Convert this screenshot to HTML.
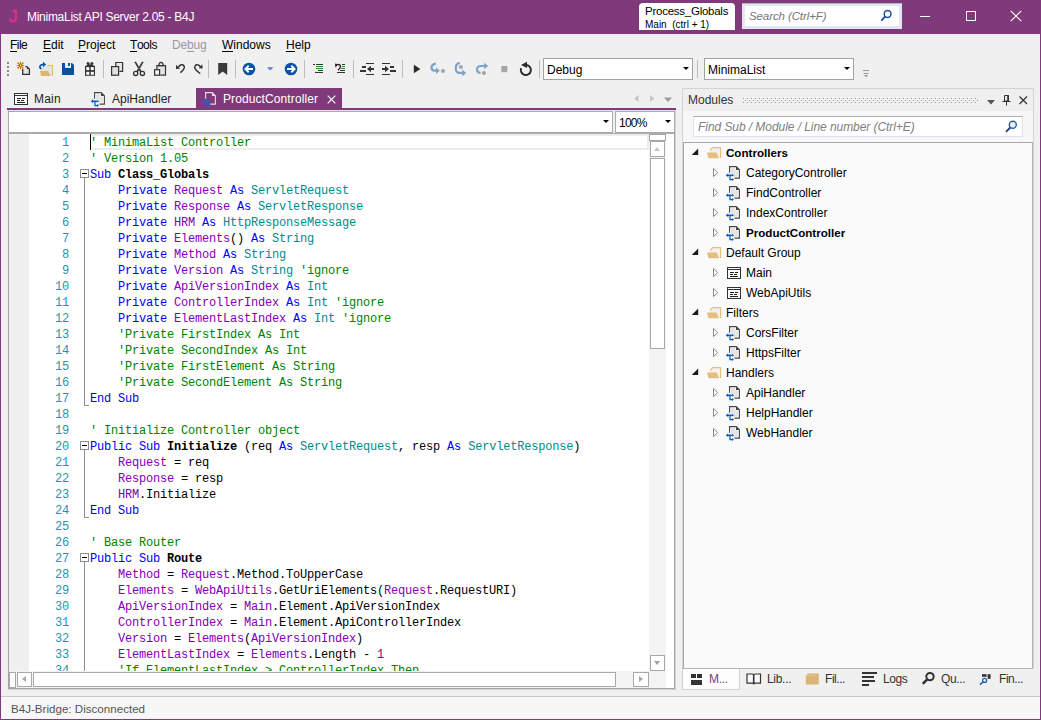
<!DOCTYPE html>
<html><head><meta charset="utf-8"><title>MinimaList API Server 2.05 - B4J</title>
<style>
*{box-sizing:border-box;margin:0;padding:0}
html,body{width:1041px;height:720px;overflow:hidden}
body{background:#80397B;font-family:"Liberation Sans",sans-serif;font-size:12px;color:#1e1e1e;position:relative}
div,span,svg{position:absolute}
.t{white-space:pre;line-height:16px;height:16px}
.t u{text-decoration:none;border-bottom:1px solid currentColor;display:inline-block;position:static;line-height:12px;height:13px}
#client{left:1px;top:34px;width:1039px;height:685px;background:#F0F0F0}
.sep{width:1px;height:18px;top:60px;background:#BDBDBD}
.combo{background:#fff;border:1px solid #A2A2A6}
.arr{width:0;height:0;border-left:3.2px solid transparent;border-right:3.2px solid transparent;border-top:3.6px solid #000}
#code div,#nums div{font-family:"Liberation Mono",monospace;font-size:12px;letter-spacing:-0.2px;line-height:16px;height:16px;white-space:pre}
#code div{left:90px;color:#000}
#code span{position:static}
#nums div{width:60px;text-align:right;left:9px;color:#2B91AF}
.k{color:#0000FF}.c{color:#008000}.v{color:#8000B8}.ty{color:#008B8B}.b{font-weight:bold;color:#000}.n{color:#8B008B}
.tree .t{font-size:12px}
</style></head><body>
<div id="title" style="left:0;top:0;width:1041px;height:34px;background:#80397B">
<div class="t" style="left:9px;top:6px;font-size:17.2px;-webkit-text-stroke:0.45px #E8289C;color:#E8289C;line-height:20px;height:20px">J</div>
<div class="t" style="left:27px;top:9px;font-size:12px;color:#fff;letter-spacing:-0.28px">MinimaList API Server 2.05 - B4J</div>
<div style="left:639px;top:3px;width:96px;height:27px;background:#fff;border-radius:4px 4px 0 0"></div>
<div class="t" style="left:645px;top:3px;font-size:11.5px;letter-spacing:-0.25px;color:#000">Process_Globals</div>
<div class="t" style="left:645px;top:18px;font-size:10px;color:#000;line-height:14px">Main  (ctrl + 1)</div>
<div style="left:742px;top:3px;width:160px;height:26px;background:#fff;border:3px solid #E2E6EE"></div>
<div style="left:742px;top:3px;width:160px;height:1px;background:#B4B6BA"></div>
<div class="t" style="left:749px;top:8px;font-size:11.5px;letter-spacing:-0.1px;font-style:italic;color:#767676">Search (Ctrl+F)</div>
<svg style="left:880px;top:9px" width="13" height="13" viewBox="0 0 13 13"><circle cx="7.6" cy="5" r="3.4" fill="none" stroke="#1E4E9C" stroke-width="1.5"/><path d="M5.3 7.5 L1.2 11.6" stroke="#1E4E9C" stroke-width="1.8"/></svg>
<div style="left:920px;top:16px;width:10px;height:1px;background:#fff"></div>
<div style="left:966px;top:11px;width:10px;height:10px;border:1px solid #fff"></div>
<svg style="left:1010px;top:10px" width="12" height="12" viewBox="0 0 12 12"><path d="M0.8 0.8 L11.2 11.2 M11.2 0.8 L0.8 11.2" stroke="#fff" stroke-width="1.1"/></svg>
</div>
<div id="client"></div>
<div class="t" style="left:10px;top:37px;font-size:12px;letter-spacing:-0.55px;color:#000"><u>F</u>ile</div>
<div class="t" style="left:43px;top:37px;font-size:12px;letter-spacing:0px;color:#000"><u>E</u>dit</div>
<div class="t" style="left:78px;top:37px;font-size:12px;letter-spacing:0px;color:#000"><u>P</u>roject</div>
<div class="t" style="left:130px;top:37px;font-size:12px;letter-spacing:-0.45px;color:#000"><u>T</u>ools</div>
<div class="t" style="left:172px;top:37px;font-size:12px;letter-spacing:-0.15px;color:#9A9A9A">De<u>b</u>ug</div>
<div class="t" style="left:222px;top:37px;font-size:12px;letter-spacing:0px;color:#000"><u>W</u>indows</div>
<div class="t" style="left:286px;top:37px;font-size:12px;letter-spacing:0px;color:#000"><u>H</u>elp</div>
<div id="toolbar">
<div style="left:7px;top:62px;width:2px;height:15px;background:repeating-linear-gradient(#8a8a8a 0 2px,transparent 2px 4px)"></div>
<div class="sep" style="left:103px"></div>
<div class="sep" style="left:208px"></div>
<div class="sep" style="left:235px"></div>
<div class="sep" style="left:304px"></div>
<div class="sep" style="left:353px"></div>
<div class="sep" style="left:402px"></div>
<div class="sep" style="left:539px"></div>
<div class="sep" style="left:697px"></div>
<svg style="left:0;top:56px" width="540" height="26" viewBox="0 56 540 26"><g stroke="#C8780A" stroke-width="1.15" fill="none"><path d="M20.5 61.8V64.4M20.5 66.6V69.2M16.8 65.5H19.4M21.6 65.5H24.2M18 63L19.4 64.4M23 63L21.6 64.4M18 68L19.4 66.6M23 68L21.6 66.6"/><circle cx="20.5" cy="65.5" r="1.3"/></g><g fill="#C8780A"><circle cx="18" cy="63" r="0.75"/><circle cx="23" cy="63" r="0.75"/><circle cx="18" cy="68" r="0.75"/><circle cx="23" cy="68" r="0.75"/></g><path d="M23.4 69V74.2H29.3V69.2L26.8 66.7H25.2" fill="#E4E4E4" stroke="none"/><path d="M22.7 69V74.3H29.4V69.2L26.9 66.6H25.4" fill="none" stroke="#333" stroke-width="1.3"/><path d="M27 66.9V69H29.2Z" fill="#333"/><path d="M40 66H52V75.5H41Z" fill="#E4E4E4"/><path d="M47.3 65.5H52.5V76" fill="none" stroke="#DDB56E" stroke-width="1"/><path d="M40 71.1H47.9L50.9 76H41Z" fill="#DDB56E"/><path d="M41.4 68.6C38.6 67.6 39.6 64.4 44 64.4" fill="none" stroke="#0854A8" stroke-width="1.7"/><path d="M43 61.8L46.2 64.4L43 67.2Z" fill="#0854A8"/><path d="M62 63H72L74 65V75H62Z" fill="#07519F"/><rect x="65" y="63" width="6" height="4.9" fill="#F4F4F4"/><rect x="68" y="63" width="2" height="2.9" fill="#07519F"/><rect x="85" y="66" width="10" height="9.8" fill="#333"/><g fill="#fff"><rect x="86.3" y="67.1" width="3" height="3"/><rect x="90.8" y="67.1" width="3" height="3"/><rect x="86.3" y="71.8" width="3" height="3"/><rect x="90.8" y="71.8" width="3" height="3"/></g><path d="M90 66.4L86.4 64L87.2 62L89.4 62.5Z M90 66.4L93.6 64L92.8 62L90.6 62.5Z" fill="#333"/><rect x="86.4" y="65" width="7.2" height="1.2" fill="#333"/><rect x="116" y="63" width="6.4" height="8.4" fill="#E6E6E6"/><path d="M115.8 66V62.5H122.6V71.3H119.4" fill="none" stroke="#333" stroke-width="1.2"/><rect x="111.6" y="66.6" width="7" height="8.6" fill="#E0E0E0" stroke="#333" stroke-width="1.2"/><path d="M134.6 62L135.9 61.9L141.6 71.6L140.4 72.2ZM143.4 62L142.1 61.9L136.4 71.6L137.6 72.2Z" fill="#333" stroke="#333" stroke-width="0.5"/><g fill="#F4F4F4" stroke="#333" stroke-width="1.3"><circle cx="135.7" cy="73.4" r="2.1"/><circle cx="142.4" cy="73.4" r="2.1"/></g><rect x="157.4" y="66.2" width="7.6" height="8.6" fill="#E4E4E4"/><path d="M156.9 69.4V65.7H165.5V75.2H160.4" fill="none" stroke="#333" stroke-width="1.2"/><path d="M158.8 65.6C159.2 61.4 162.9 61.4 163.3 65.6Z" fill="#F4F4F4" stroke="#333" stroke-width="1.2"/><rect x="154.6" y="69.7" width="5" height="5.5" fill="#F4F4F4" stroke="#333" stroke-width="1.2"/><path d="M178.6 67.4C179.6 64.2 184.7 63.6 184.3 67.8C184.1 70 182.2 71.2 180.3 72.7" fill="none" stroke="#333" stroke-width="1.5"/><path d="M176 64.8V68.9L180 68.7Z" fill="#333"/><path d="M200.4 66.9C199 64 194.4 64 194.8 67.8C195 69.6 197 71 200.2 73.6" fill="none" stroke="#333" stroke-width="1.5"/><path d="M202.2 64.2L202.7 68.6L198.8 68.2Z" fill="#333"/><path d="M218.2 63H227.2V75L222.7 71.6L218.2 75Z" fill="#3A3A3A"/><circle cx="249" cy="69" r="6.3" fill="#0B53A5"/><path d="M253 69H246M248.7 65.8L245.4 69L248.7 72.2" fill="none" stroke="#fff" stroke-width="1.9"/><circle cx="291" cy="69" r="6.3" fill="#0B53A5"/><path d="M287 69H294M291.3 65.8L294.6 69L291.3 72.2" fill="none" stroke="#fff" stroke-width="1.9"/><path d="M267 67.2H273.4L270.2 70.6Z" fill="#4F81C7"/><g shape-rendering="crispEdges"><path d="M313 64.5H315M316 64.5H323M318 70.5H323M315 72.5H323" stroke="#333"/><path d="M316 66.5H323M316 68.5H323" stroke="#2E8B2E"/></g><g shape-rendering="crispEdges"><path d="M342 64.5H345M340 70.5H345M337 72.5H345" stroke="#333"/><path d="M342 66.5H345M341 68.5H345" stroke="#2E8B2E"/></g><path d="M337.5 64.6C340.6 64 342 67 338 70.2" fill="none" stroke="#222" stroke-width="1.3"/><path d="M335 63.6L338.4 64.2L335.4 67.4Z" fill="#222"/><g shape-rendering="crispEdges" fill="#333"><rect x="366" y="63" width="8" height="1"/><rect x="366" y="74" width="8" height="1"/><rect x="362" y="66" width="4" height="2"/><rect x="360" y="70" width="6" height="2"/><rect x="369" y="68" width="5" height="2"/></g><path d="M367 69L371 65.8V72.2Z" fill="#333"/><g shape-rendering="crispEdges" fill="#333"><rect x="382" y="63" width="8" height="1"/><rect x="382" y="74" width="8" height="1"/><rect x="390" y="66" width="4" height="2"/><rect x="390" y="70" width="6" height="2"/><rect x="382" y="68" width="5" height="2"/></g><path d="M389 69L385 65.8V72.2Z" fill="#333"/><path d="M413.8 64.8V73.2L420.4 69Z" fill="#2A2A2A"/><path d="M435.8 63.6C430.6 64.4 430 69.8 434.4 70.6H437" fill="none" stroke="#7BA3CC" stroke-width="2.2"/><path d="M436 67.4L439.8 70.7L436 74Z" fill="#7BA3CC"/><circle cx="443" cy="71" r="2" fill="#A3A3A3"/><path d="M459.8 62.9C454.4 63.6 454.6 72.8 459 72.8H463" fill="none" stroke="#7BA3CC" stroke-width="2.2"/><path d="M462.2 69.6L466.2 72.9L462.2 76.2Z" fill="#7BA3CC"/><circle cx="460.9" cy="66.9" r="2" fill="#A3A3A3"/><path d="M480.6 73C475.6 72.4 475.8 66 481 66H485" fill="none" stroke="#7BA3CC" stroke-width="2.2"/><path d="M484.2 62.8L488.2 66L484.2 69.2Z" fill="#7BA3CC"/><circle cx="484" cy="73" r="2" fill="#A3A3A3"/><rect x="501.3" y="66" width="6" height="6.2" fill="#A6A6A6"/><path d="M521.1 68.2A5.05 5.05 0 1 0 526.4 64.95" fill="none" stroke="#2A2A2A" stroke-width="1.9"/><path d="M521 64.9L527 61.7V68.1Z" fill="#2A2A2A"/></svg>
<div class="combo" style="left:543px;top:58px;width:150px;height:22px"></div>
<div class="t" style="left:547px;top:62px;font-size:12px;color:#000">Debug</div>
<div class="arr" style="left:683px;top:67px"></div>
<div class="combo" style="left:704px;top:58px;width:150px;height:22px"></div>
<div class="t" style="left:708px;top:62px;font-size:12px;color:#000">MinimaList</div>
<div class="arr" style="left:844px;top:67px"></div>
<svg style="left:863px;top:70px" width="6" height="8" viewBox="0 0 6 8"><path d="M0 0.5H6M0.5 3.5H5.5" stroke="#9a9a9a" stroke-width="1"/><path d="M1 5H5L3 7.5Z" fill="#9a9a9a"/></svg>
</div>
<div id="tabs">
<div style="left:196px;top:88px;width:146px;height:21px;background:#80397B"></div>
<div style="left:7px;top:108px;width:669px;height:2px;background:#80397B"></div>
<div class="t" style="left:34px;top:91px;font-size:12px;letter-spacing:0.2px;color:#1e1e1e">Main</div>
<div class="t" style="left:112px;top:91px;font-size:12px;color:#1e1e1e">ApiHandler</div>
<div class="t" style="left:223px;top:91px;font-size:12px;letter-spacing:0.1px;color:#fff">ProductController</div>
<svg style="left:327px;top:95px" width="9" height="9" viewBox="0 0 9 9"><path d="M0.7 0.7 L8.3 8.3 M8.3 0.7 L0.7 8.3" stroke="#fff" stroke-width="1.2"/></svg>
<svg style="left:14px;top:93px" width="14" height="12" viewBox="0 0 14 12" shape-rendering="crispEdges"><rect x="0.5" y="0.5" width="13" height="11" fill="#FAFAFA" stroke="#333"/><rect x="1" y="1" width="12" height="2" fill="#333"/><rect x="1" y="1" width="12" height="1" fill="#FAFAFA"/><path d="M3 5.5H7M8 5.5H11M3 7.5H6M7 7.5H10M3 9.5H11" stroke="#222"/></svg>
<svg style="left:90px;top:91px" width="17" height="18" viewBox="-4 -1 17 18"><path d="M0.6 0.6H7.2L10.4 3.8V12.1H0.6Z" fill="#fff"/><path d="M2 2H6.4V4.8H9V10.7H2Z" fill="#E4E4E4"/><path d="M0.6 6.8V0.6H7.2L10.4 3.8V12.1H5.4" fill="none" stroke="#444" stroke-width="1.1"/><path d="M7 0.6V4H10.4Z" fill="#444"/><path d="M-2.4 9.3H4M1 8.2V13.6H3.2" fill="none" stroke="#0B5CC4" stroke-width="1.25"/><path d="M-3.2 9.3L-0.7 7.2V11.2Z M5 9.3L3.2 8V10.6Z M5 13.6L3 12.1V15.1Z" fill="#0B5CC4"/></svg>
<svg style="left:201px;top:91px" width="17" height="18" viewBox="-4 -1 17 18"><path d="M0.6 6.8V0.6H7.2L10.4 3.8V12.1H5.4" fill="none" stroke="#E6DAE5" stroke-width="1.1"/><path d="M7 0.6V4H10.4Z" fill="#E6DAE5"/><path d="M-2.4 9.3H4M1 8.2V13.6H3.2" fill="none" stroke="#1565D8" stroke-width="1.25"/><path d="M-3.2 9.3L-0.7 7.2V11.2Z M5 9.3L3.2 8V10.6Z M5 13.6L3 12.1V15.1Z" fill="#1565D8"/></svg>
<svg style="left:634px;top:94px" width="40" height="10" viewBox="0 0 40 10"><path d="M4.5 1V8L0 4.5Z M16 1V8L20.5 4.5Z" fill="#C6C6C6"/><path d="M30 3.5H38L34 8Z" fill="#999"/></svg>
</div>
<div id="editor">
<div style="left:8px;top:110px;width:668px;height:580px;background:#fff;border:1px solid #D4D4D4;border-top:1px solid #E4E4E4;border-left:none"></div>
<div style="left:8px;top:110px;width:667px;height:579px;background:#fff;border:1px solid #A4A4A4;border-top:1px solid #E4E4E4"></div>
<div style="left:8px;top:111px;width:605px;height:22px;background:#fff;border:1px solid #ABABAB"></div>
<div style="left:613px;top:111px;width:2px;height:22px;background:#F0F0F0"></div>
<div style="left:615px;top:111px;width:60px;height:22px;background:#fff;border:1px solid #ABABAB"></div>
<div class="arr" style="left:603px;top:120px"></div>
<div class="arr" style="left:665px;top:120px"></div>
<div class="t" style="left:619px;top:115px;font-size:12px;letter-spacing:-0.75px;color:#000">100%</div>
<div style="left:9px;top:133px;width:665px;height:1px;background:#ABABAB"></div>
<div style="left:9px;top:134px;width:20px;height:537px;background:#F0F0F0"></div>
<div style="left:91px;top:134px;width:558px;height:16px;border:2px solid #ECECEC;border-left:none"></div>
<div style="left:90px;top:134px;width:1px;height:16px;background:#000"></div>
<div id="codeclip" style="left:9px;top:134px;width:640px;height:537px;overflow:hidden">
<div id="nums" style="left:-9px;top:-133px">
<div style="top:134px">1</div>
<div style="top:150px">2</div>
<div style="top:166px">3</div>
<div style="top:182px">4</div>
<div style="top:198px">5</div>
<div style="top:214px">6</div>
<div style="top:230px">7</div>
<div style="top:246px">8</div>
<div style="top:262px">9</div>
<div style="top:278px">10</div>
<div style="top:294px">11</div>
<div style="top:310px">12</div>
<div style="top:326px">13</div>
<div style="top:342px">14</div>
<div style="top:358px">15</div>
<div style="top:374px">16</div>
<div style="top:390px">17</div>
<div style="top:406px">18</div>
<div style="top:422px">19</div>
<div style="top:438px">20</div>
<div style="top:454px">21</div>
<div style="top:470px">22</div>
<div style="top:486px">23</div>
<div style="top:502px">24</div>
<div style="top:518px">25</div>
<div style="top:534px">26</div>
<div style="top:550px">27</div>
<div style="top:566px">28</div>
<div style="top:582px">29</div>
<div style="top:598px">30</div>
<div style="top:614px">31</div>
<div style="top:630px">32</div>
<div style="top:646px">33</div>
<div style="top:662px">34</div>
</div>
<div id="code" style="left:-9px;top:-133px">
<div style="top:134px"><span class="c">&#x27; MinimaList Controller</span></div>
<div style="top:150px"><span class="c">&#x27; Version 1.05</span></div>
<div style="top:166px"><span class="k">Sub </span><span class="b">Class_Globals</span></div>
<div style="top:182px">    <span class="k">Private </span><span class="v">Request</span><span class="k"> As </span><span class="ty">ServletRequest</span></div>
<div style="top:198px">    <span class="k">Private </span><span class="v">Response</span><span class="k"> As </span><span class="ty">ServletResponse</span></div>
<div style="top:214px">    <span class="k">Private </span><span class="v">HRM</span><span class="k"> As </span><span class="ty">HttpResponseMessage</span></div>
<div style="top:230px">    <span class="k">Private </span><span class="v">Elements</span>()<span class="k"> As </span><span class="ty">String</span></div>
<div style="top:246px">    <span class="k">Private </span><span class="v">Method</span><span class="k"> As </span><span class="ty">String</span></div>
<div style="top:262px">    <span class="k">Private </span><span class="v">Version</span><span class="k"> As </span><span class="ty">String</span><span class="c"> &#x27;ignore</span></div>
<div style="top:278px">    <span class="k">Private </span><span class="v">ApiVersionIndex</span><span class="k"> As </span><span class="ty">Int</span></div>
<div style="top:294px">    <span class="k">Private </span><span class="v">ControllerIndex</span><span class="k"> As </span><span class="ty">Int</span><span class="c"> &#x27;ignore</span></div>
<div style="top:310px">    <span class="k">Private </span><span class="v">ElementLastIndex</span><span class="k"> As </span><span class="ty">Int</span><span class="c"> &#x27;ignore</span></div>
<div style="top:326px">    <span class="c">&#x27;Private FirstIndex As Int</span></div>
<div style="top:342px">    <span class="c">&#x27;Private SecondIndex As Int</span></div>
<div style="top:358px">    <span class="c">&#x27;Private FirstElement As String</span></div>
<div style="top:374px">    <span class="c">&#x27;Private SecondElement As String</span></div>
<div style="top:390px"><span class="k">End Sub</span></div>
<div style="top:422px"><span class="c">&#x27; Initialize Controller object</span></div>
<div style="top:438px"><span class="k">Public Sub </span><span class="b">Initialize</span> (req<span class="k"> As </span><span class="ty">ServletRequest</span>, resp<span class="k"> As </span><span class="ty">ServletResponse</span>)</div>
<div style="top:454px">    <span class="v">Request</span> = req</div>
<div style="top:470px">    <span class="v">Response</span> = resp</div>
<div style="top:486px">    <span class="v">HRM</span>.Initialize</div>
<div style="top:502px"><span class="k">End Sub</span></div>
<div style="top:534px"><span class="c">&#x27; Base Router</span></div>
<div style="top:550px"><span class="k">Public Sub </span><span class="b">Route</span></div>
<div style="top:566px">    <span class="v">Method</span> = <span class="v">Request</span>.Method.ToUpperCase</div>
<div style="top:582px">    <span class="v">Elements</span> = <span class="v">WebApiUtils</span>.GetUriElements(<span class="v">Request</span>.RequestURI)</div>
<div style="top:598px">    <span class="v">ApiVersionIndex</span> = <span class="v">Main</span>.Element.ApiVersionIndex</div>
<div style="top:614px">    <span class="v">ControllerIndex</span> = <span class="v">Main</span>.Element.ApiControllerIndex</div>
<div style="top:630px">    <span class="v">Version</span> = <span class="v">Elements</span>(<span class="v">ApiVersionIndex</span>)</div>
<div style="top:646px">    <span class="v">ElementLastIndex</span> = <span class="v">Elements</span>.Length - <span class="n">1</span></div>
<div style="top:662px">    <span class="c">&#x27;If ElementLastIndex &gt; ControllerIndex Then</span></div>
</div>
<div style="left:0;top:-134px">
<div style="left:71px;top:169px;width:9px;height:9px;border:1px solid #8C8C8C;background:#fff"><div style="left:1px;top:3px;width:5px;height:1px;background:#000"></div></div>
<div style="left:75px;top:178px;width:1px;height:227px;background:#8C8C8C"></div>
<div style="left:75px;top:405px;width:5px;height:1px;background:#8C8C8C"></div>
<div style="left:71px;top:441px;width:9px;height:9px;border:1px solid #8C8C8C;background:#fff"><div style="left:1px;top:3px;width:5px;height:1px;background:#000"></div></div>
<div style="left:75px;top:450px;width:1px;height:67px;background:#8C8C8C"></div>
<div style="left:75px;top:517px;width:5px;height:1px;background:#8C8C8C"></div>
<div style="left:71px;top:553px;width:9px;height:9px;border:1px solid #8C8C8C;background:#fff"><div style="left:1px;top:3px;width:5px;height:1px;background:#000"></div></div>
<div style="left:75px;top:562px;width:1px;height:211px;background:#8C8C8C"></div>
</div>
</div>
<div style="left:649px;top:134px;width:17px;height:537px;background:#F3F3F3"></div>
<div style="left:649px;top:134px;width:17px;height:7px;background:#fff;border:1px solid #A8A8A8"></div>
<div style="left:650px;top:141px;width:15px;height:16px;background:#fff;border:1px solid #A8A8A8"></div>
<div style="left:654px;top:147px;width:0;height:0;border-left:3.5px solid transparent;border-right:3.5px solid transparent;border-bottom:4px solid #C4C4C4"></div>
<div style="left:650px;top:158px;width:15px;height:191px;background:#fff;border:1px solid #A8A8A8"></div>
<div style="left:650px;top:655px;width:15px;height:16px;background:#fff;border:1px solid #A8A8A8"></div>
<div style="left:654px;top:661px;width:0;height:0;border-left:3.5px solid transparent;border-right:3.5px solid transparent;border-top:4px solid #A0A0A0"></div>
<div style="left:9px;top:671px;width:657px;height:17px;background:#F3F3F3"></div>
<div style="left:9px;top:672px;width:7px;height:16px;background:#fff;border:1px solid #A8A8A8"></div>
<div style="left:17px;top:672px;width:15px;height:15px;background:#fff;border:1px solid #A8A8A8"></div>
<div style="left:22px;top:676px;width:0;height:0;border-top:3.5px solid transparent;border-bottom:3.5px solid transparent;border-right:4px solid #A6A6A6"></div>
<div style="left:33px;top:672px;width:583px;height:15px;background:#fff;border:1px solid #A8A8A8"></div>
<div style="left:633px;top:672px;width:16px;height:15px;background:#fff;border:1px solid #A8A8A8"></div>
<div style="left:639px;top:676px;width:0;height:0;border-top:3.5px solid transparent;border-bottom:3.5px solid transparent;border-left:4px solid #A6A6A6"></div>
</div>
<div style="left:1px;top:696px;width:1039px;height:1px;background:#C8C8C8"></div>
<div style="left:1px;top:697px;width:1039px;height:22px;background:#F7F7F7"></div>
<div class="t" style="left:11px;top:701px;font-size:11.6px;color:#555">B4J-Bridge: Disconnected</div>
<div id="panel">
<div style="left:682px;top:88px;width:352px;height:581px;background:#F7F7F7;border:1px solid #D3D3D6;border-bottom:none"></div>
<div style="left:683px;top:89px;width:350px;height:22px;background:#EFEFEF"></div>
<div class="t" style="left:688px;top:92px;font-size:12px;color:#333">Modules</div>
<svg style="left:743px;top:98px" width="236" height="5" viewBox="0 0 236 5" shape-rendering="crispEdges"><defs><pattern id="gp" width="4" height="4" patternUnits="userSpaceOnUse"><rect x="0" y="0" width="1" height="1" fill="#959595"/><rect x="2" y="2" width="1" height="1" fill="#959595"/></pattern></defs><rect width="236" height="5" fill="url(#gp)"/></svg>
<svg style="left:987px;top:95px" width="42" height="11" viewBox="0 0 42 11"><path d="M0 5H8L4 9.5Z" fill="#555"/><path d="M17.5 0.5H21.5V6H17.5Z M15.5 6.5H23.5 M19.5 6.5V10.5" fill="none" stroke="#333" stroke-width="1"/><path d="M21 0.5V6" stroke="#333" stroke-width="1.6"/><path d="M32.5 1.5L40 9M40 1.5L32.5 9" stroke="#333" stroke-width="1.2"/></svg>
<div style="left:693px;top:116px;width:330px;height:21px;background:#fff;border:1px solid #DDE3EE;border-top-color:#ABADB3"></div>
<div class="t" style="left:698px;top:119px;font-size:12px;letter-spacing:-0.06px;font-style:italic;color:#808080">Find Sub / Module / Line number (Ctrl+E)</div>
<svg style="left:1005px;top:120px" width="13" height="13" viewBox="0 0 13 13"><circle cx="7.8" cy="4.8" r="3.5" fill="#EAF1FB" stroke="#2A5DB0" stroke-width="1.4"/><path d="M5.3 7.5 L1 11.8" stroke="#1B3F80" stroke-width="1.8"/></svg>
<div style="left:683px;top:142px;width:350px;height:527px;background:#FAFAFA;border:1px solid #A8A8A8;border-right-color:#B4B4B4;border-bottom-color:#B4B4B4"></div>
<div class="tree">
<svg style="left:691px;top:148px" width="8" height="8" viewBox="0 0 8 8"><path d="M7.2 0.6V7H0.8Z" fill="#1a1a1a"/></svg>
<svg style="left:707px;top:147px" width="15" height="12" viewBox="0 0 15 12"><path d="M3 0.5H13.5V11H2Z" fill="#F4F1EA"/><path d="M3.2 3.4L5.8 0.6H13.6V11" fill="none" stroke="#E5BE7D" stroke-width="1.1"/><path d="M0 5.5H9.5L12.2 11.3H1.5Z" fill="#E5BE7D"/></svg>
<div class="t" style="left:726px;top:145px;font-weight:bold;font-size:11.6px;color:#000">Controllers</div>
<svg style="left:712px;top:167px" width="7" height="11" viewBox="0 0 7 11"><path d="M1.5 1.4L5.7 5.5L1.5 9.6Z" fill="#FAFAFA" stroke="#8A8A8A" stroke-width="1"/></svg>
<svg style="left:725px;top:165px" width="17" height="18" viewBox="-4 -1 17 18"><path d="M0.6 0.6H7.2L10.4 3.8V12.1H0.6Z" fill="#fff"/><path d="M2 2H6.4V4.8H9V10.7H2Z" fill="#E4E4E4"/><path d="M0.6 6.8V0.6H7.2L10.4 3.8V12.1H5.4" fill="none" stroke="#444" stroke-width="1.1"/><path d="M7 0.6V4H10.4Z" fill="#444"/><path d="M-2.4 9.3H4M1 8.2V13.6H3.2" fill="none" stroke="#0B5CC4" stroke-width="1.25"/><path d="M-3.2 9.3L-0.7 7.2V11.2Z M5 9.3L3.2 8V10.6Z M5 13.6L3 12.1V15.1Z" fill="#0B5CC4"/></svg>
<div class="t" style="left:746px;top:165px;color:#000">CategoryController</div>
<svg style="left:712px;top:187px" width="7" height="11" viewBox="0 0 7 11"><path d="M1.5 1.4L5.7 5.5L1.5 9.6Z" fill="#FAFAFA" stroke="#8A8A8A" stroke-width="1"/></svg>
<svg style="left:725px;top:185px" width="17" height="18" viewBox="-4 -1 17 18"><path d="M0.6 0.6H7.2L10.4 3.8V12.1H0.6Z" fill="#fff"/><path d="M2 2H6.4V4.8H9V10.7H2Z" fill="#E4E4E4"/><path d="M0.6 6.8V0.6H7.2L10.4 3.8V12.1H5.4" fill="none" stroke="#444" stroke-width="1.1"/><path d="M7 0.6V4H10.4Z" fill="#444"/><path d="M-2.4 9.3H4M1 8.2V13.6H3.2" fill="none" stroke="#0B5CC4" stroke-width="1.25"/><path d="M-3.2 9.3L-0.7 7.2V11.2Z M5 9.3L3.2 8V10.6Z M5 13.6L3 12.1V15.1Z" fill="#0B5CC4"/></svg>
<div class="t" style="left:746px;top:185px;color:#000">FindController</div>
<svg style="left:712px;top:207px" width="7" height="11" viewBox="0 0 7 11"><path d="M1.5 1.4L5.7 5.5L1.5 9.6Z" fill="#FAFAFA" stroke="#8A8A8A" stroke-width="1"/></svg>
<svg style="left:725px;top:205px" width="17" height="18" viewBox="-4 -1 17 18"><path d="M0.6 0.6H7.2L10.4 3.8V12.1H0.6Z" fill="#fff"/><path d="M2 2H6.4V4.8H9V10.7H2Z" fill="#E4E4E4"/><path d="M0.6 6.8V0.6H7.2L10.4 3.8V12.1H5.4" fill="none" stroke="#444" stroke-width="1.1"/><path d="M7 0.6V4H10.4Z" fill="#444"/><path d="M-2.4 9.3H4M1 8.2V13.6H3.2" fill="none" stroke="#0B5CC4" stroke-width="1.25"/><path d="M-3.2 9.3L-0.7 7.2V11.2Z M5 9.3L3.2 8V10.6Z M5 13.6L3 12.1V15.1Z" fill="#0B5CC4"/></svg>
<div class="t" style="left:746px;top:205px;color:#000">IndexController</div>
<svg style="left:712px;top:227px" width="7" height="11" viewBox="0 0 7 11"><path d="M1.5 1.4L5.7 5.5L1.5 9.6Z" fill="#FAFAFA" stroke="#8A8A8A" stroke-width="1"/></svg>
<svg style="left:725px;top:225px" width="17" height="18" viewBox="-4 -1 17 18"><path d="M0.6 0.6H7.2L10.4 3.8V12.1H0.6Z" fill="#fff"/><path d="M2 2H6.4V4.8H9V10.7H2Z" fill="#E4E4E4"/><path d="M0.6 6.8V0.6H7.2L10.4 3.8V12.1H5.4" fill="none" stroke="#444" stroke-width="1.1"/><path d="M7 0.6V4H10.4Z" fill="#444"/><path d="M-2.4 9.3H4M1 8.2V13.6H3.2" fill="none" stroke="#0B5CC4" stroke-width="1.25"/><path d="M-3.2 9.3L-0.7 7.2V11.2Z M5 9.3L3.2 8V10.6Z M5 13.6L3 12.1V15.1Z" fill="#0B5CC4"/></svg>
<div class="t" style="left:746px;top:225px;font-weight:bold;font-size:11.6px;color:#000">ProductController</div>
<svg style="left:691px;top:248px" width="8" height="8" viewBox="0 0 8 8"><path d="M7.2 0.6V7H0.8Z" fill="#1a1a1a"/></svg>
<svg style="left:707px;top:247px" width="15" height="12" viewBox="0 0 15 12"><path d="M3 0.5H13.5V11H2Z" fill="#F4F1EA"/><path d="M3.2 3.4L5.8 0.6H13.6V11" fill="none" stroke="#E5BE7D" stroke-width="1.1"/><path d="M0 5.5H9.5L12.2 11.3H1.5Z" fill="#E5BE7D"/></svg>
<div class="t" style="left:726px;top:245px;color:#000">Default Group</div>
<svg style="left:712px;top:267px" width="7" height="11" viewBox="0 0 7 11"><path d="M1.5 1.4L5.7 5.5L1.5 9.6Z" fill="#FAFAFA" stroke="#8A8A8A" stroke-width="1"/></svg>
<svg style="left:727px;top:267px" width="14" height="12" viewBox="0 0 14 12" shape-rendering="crispEdges"><rect x="0.5" y="0.5" width="13" height="11" fill="#FAFAFA" stroke="#333"/><rect x="1" y="1" width="12" height="2" fill="#333"/><rect x="1" y="1" width="12" height="1" fill="#FAFAFA"/><path d="M3 5.5H7M8 5.5H11M3 7.5H6M7 7.5H10M3 9.5H11" stroke="#222"/></svg>
<div class="t" style="left:746px;top:265px;color:#000">Main</div>
<svg style="left:712px;top:287px" width="7" height="11" viewBox="0 0 7 11"><path d="M1.5 1.4L5.7 5.5L1.5 9.6Z" fill="#FAFAFA" stroke="#8A8A8A" stroke-width="1"/></svg>
<svg style="left:727px;top:287px" width="14" height="12" viewBox="0 0 14 12" shape-rendering="crispEdges"><rect x="0.5" y="0.5" width="13" height="11" fill="#FAFAFA" stroke="#333"/><rect x="1" y="1" width="12" height="2" fill="#333"/><rect x="1" y="1" width="12" height="1" fill="#FAFAFA"/><path d="M3 5.5H7M8 5.5H11M3 7.5H6M7 7.5H10M3 9.5H11" stroke="#222"/></svg>
<div class="t" style="left:746px;top:285px;color:#000">WebApiUtils</div>
<svg style="left:691px;top:308px" width="8" height="8" viewBox="0 0 8 8"><path d="M7.2 0.6V7H0.8Z" fill="#1a1a1a"/></svg>
<svg style="left:707px;top:307px" width="15" height="12" viewBox="0 0 15 12"><path d="M3 0.5H13.5V11H2Z" fill="#F4F1EA"/><path d="M3.2 3.4L5.8 0.6H13.6V11" fill="none" stroke="#E5BE7D" stroke-width="1.1"/><path d="M0 5.5H9.5L12.2 11.3H1.5Z" fill="#E5BE7D"/></svg>
<div class="t" style="left:726px;top:305px;color:#000">Filters</div>
<svg style="left:712px;top:327px" width="7" height="11" viewBox="0 0 7 11"><path d="M1.5 1.4L5.7 5.5L1.5 9.6Z" fill="#FAFAFA" stroke="#8A8A8A" stroke-width="1"/></svg>
<svg style="left:725px;top:325px" width="17" height="18" viewBox="-4 -1 17 18"><path d="M0.6 0.6H7.2L10.4 3.8V12.1H0.6Z" fill="#fff"/><path d="M2 2H6.4V4.8H9V10.7H2Z" fill="#E4E4E4"/><path d="M0.6 6.8V0.6H7.2L10.4 3.8V12.1H5.4" fill="none" stroke="#444" stroke-width="1.1"/><path d="M7 0.6V4H10.4Z" fill="#444"/><path d="M-2.4 9.3H4M1 8.2V13.6H3.2" fill="none" stroke="#0B5CC4" stroke-width="1.25"/><path d="M-3.2 9.3L-0.7 7.2V11.2Z M5 9.3L3.2 8V10.6Z M5 13.6L3 12.1V15.1Z" fill="#0B5CC4"/></svg>
<div class="t" style="left:746px;top:325px;color:#000">CorsFilter</div>
<svg style="left:712px;top:347px" width="7" height="11" viewBox="0 0 7 11"><path d="M1.5 1.4L5.7 5.5L1.5 9.6Z" fill="#FAFAFA" stroke="#8A8A8A" stroke-width="1"/></svg>
<svg style="left:725px;top:345px" width="17" height="18" viewBox="-4 -1 17 18"><path d="M0.6 0.6H7.2L10.4 3.8V12.1H0.6Z" fill="#fff"/><path d="M2 2H6.4V4.8H9V10.7H2Z" fill="#E4E4E4"/><path d="M0.6 6.8V0.6H7.2L10.4 3.8V12.1H5.4" fill="none" stroke="#444" stroke-width="1.1"/><path d="M7 0.6V4H10.4Z" fill="#444"/><path d="M-2.4 9.3H4M1 8.2V13.6H3.2" fill="none" stroke="#0B5CC4" stroke-width="1.25"/><path d="M-3.2 9.3L-0.7 7.2V11.2Z M5 9.3L3.2 8V10.6Z M5 13.6L3 12.1V15.1Z" fill="#0B5CC4"/></svg>
<div class="t" style="left:746px;top:345px;color:#000">HttpsFilter</div>
<svg style="left:691px;top:368px" width="8" height="8" viewBox="0 0 8 8"><path d="M7.2 0.6V7H0.8Z" fill="#1a1a1a"/></svg>
<svg style="left:707px;top:367px" width="15" height="12" viewBox="0 0 15 12"><path d="M3 0.5H13.5V11H2Z" fill="#F4F1EA"/><path d="M3.2 3.4L5.8 0.6H13.6V11" fill="none" stroke="#E5BE7D" stroke-width="1.1"/><path d="M0 5.5H9.5L12.2 11.3H1.5Z" fill="#E5BE7D"/></svg>
<div class="t" style="left:726px;top:365px;color:#000">Handlers</div>
<svg style="left:712px;top:387px" width="7" height="11" viewBox="0 0 7 11"><path d="M1.5 1.4L5.7 5.5L1.5 9.6Z" fill="#FAFAFA" stroke="#8A8A8A" stroke-width="1"/></svg>
<svg style="left:725px;top:385px" width="17" height="18" viewBox="-4 -1 17 18"><path d="M0.6 0.6H7.2L10.4 3.8V12.1H0.6Z" fill="#fff"/><path d="M2 2H6.4V4.8H9V10.7H2Z" fill="#E4E4E4"/><path d="M0.6 6.8V0.6H7.2L10.4 3.8V12.1H5.4" fill="none" stroke="#444" stroke-width="1.1"/><path d="M7 0.6V4H10.4Z" fill="#444"/><path d="M-2.4 9.3H4M1 8.2V13.6H3.2" fill="none" stroke="#0B5CC4" stroke-width="1.25"/><path d="M-3.2 9.3L-0.7 7.2V11.2Z M5 9.3L3.2 8V10.6Z M5 13.6L3 12.1V15.1Z" fill="#0B5CC4"/></svg>
<div class="t" style="left:746px;top:385px;color:#000">ApiHandler</div>
<svg style="left:712px;top:407px" width="7" height="11" viewBox="0 0 7 11"><path d="M1.5 1.4L5.7 5.5L1.5 9.6Z" fill="#FAFAFA" stroke="#8A8A8A" stroke-width="1"/></svg>
<svg style="left:725px;top:405px" width="17" height="18" viewBox="-4 -1 17 18"><path d="M0.6 0.6H7.2L10.4 3.8V12.1H0.6Z" fill="#fff"/><path d="M2 2H6.4V4.8H9V10.7H2Z" fill="#E4E4E4"/><path d="M0.6 6.8V0.6H7.2L10.4 3.8V12.1H5.4" fill="none" stroke="#444" stroke-width="1.1"/><path d="M7 0.6V4H10.4Z" fill="#444"/><path d="M-2.4 9.3H4M1 8.2V13.6H3.2" fill="none" stroke="#0B5CC4" stroke-width="1.25"/><path d="M-3.2 9.3L-0.7 7.2V11.2Z M5 9.3L3.2 8V10.6Z M5 13.6L3 12.1V15.1Z" fill="#0B5CC4"/></svg>
<div class="t" style="left:746px;top:405px;color:#000">HelpHandler</div>
<svg style="left:712px;top:427px" width="7" height="11" viewBox="0 0 7 11"><path d="M1.5 1.4L5.7 5.5L1.5 9.6Z" fill="#FAFAFA" stroke="#8A8A8A" stroke-width="1"/></svg>
<svg style="left:725px;top:425px" width="17" height="18" viewBox="-4 -1 17 18"><path d="M0.6 0.6H7.2L10.4 3.8V12.1H0.6Z" fill="#fff"/><path d="M2 2H6.4V4.8H9V10.7H2Z" fill="#E4E4E4"/><path d="M0.6 6.8V0.6H7.2L10.4 3.8V12.1H5.4" fill="none" stroke="#444" stroke-width="1.1"/><path d="M7 0.6V4H10.4Z" fill="#444"/><path d="M-2.4 9.3H4M1 8.2V13.6H3.2" fill="none" stroke="#0B5CC4" stroke-width="1.25"/><path d="M-3.2 9.3L-0.7 7.2V11.2Z M5 9.3L3.2 8V10.6Z M5 13.6L3 12.1V15.1Z" fill="#0B5CC4"/></svg>
<div class="t" style="left:746px;top:425px;color:#000">WebHandler</div>
</div>
<div style="left:682px;top:669px;width:58px;height:21px;background:#FDFDFD;border:1px solid #D0D0D0;border-top:none"></div>
<svg style="left:691px;top:674px" width="11" height="11" viewBox="0 0 11 11" shape-rendering="crispEdges"><rect x="0" y="0" width="4.5" height="4" fill="#333"/><rect x="6" y="0" width="4.5" height="4" fill="#333"/><rect x="0" y="5.5" width="10.5" height="5" fill="#333"/></svg>
<div class="t" style="left:709px;top:671px;font-size:12px;letter-spacing:-0.3px;color:#80397B">M...</div>
<svg style="left:746px;top:673px" width="16" height="12" viewBox="0 0 16 12"><path d="M1 1H6.4C7.2 1 7.5 1.6 7.5 2.2V10.2H1Z M14.5 1H9C8.2 1 7.9 1.6 7.9 2.2V10.2H14.5Z" fill="#FAFAFA" stroke="#333" stroke-width="1.2"/><path d="M7.7 9.5V11.5" stroke="#333" stroke-width="1.6"/></svg>
<div class="t" style="left:767px;top:671px;font-size:12px;letter-spacing:-0.3px;color:#333">Lib...</div>
<svg style="left:805px;top:673px" width="15" height="12" viewBox="0 0 15 12"><path d="M0.8 2.6L3 0.6H13.8V11.4H0.8Z" fill="#DDB477"/><path d="M0.8 2.8H9.6L11.4 0.8" fill="none" stroke="#EACB9A" stroke-width="0.8"/></svg>
<div class="t" style="left:825px;top:671px;font-size:12px;letter-spacing:-0.45px;color:#333">Fil...</div>
<svg style="left:862px;top:672px" width="16" height="14" viewBox="0 0 16 14" shape-rendering="crispEdges"><path d="M0 1H15M0 5H12M0 9H13M0 13H7" stroke="#333" stroke-width="2"/></svg>
<div class="t" style="left:883px;top:671px;font-size:12px;letter-spacing:-0.4px;color:#333">Logs</div>
<svg style="left:921px;top:671px" width="15" height="15" viewBox="0 0 15 15"><circle cx="9" cy="5.6" r="3.7" fill="none" stroke="#333" stroke-width="2"/><path d="M6.2 8.4L1.8 12.8" stroke="#333" stroke-width="2.6"/></svg>
<div class="t" style="left:941px;top:671px;font-size:12px;letter-spacing:-0.35px;color:#333">Qu...</div>
<svg style="left:979px;top:674px" width="13" height="12" viewBox="0 0 13 12"><rect x="3" y="0.2" width="4.6" height="2.6" fill="#333"/><rect x="8.6" y="0.2" width="3" height="4.6" fill="#333"/><circle cx="5.6" cy="6.4" r="2" fill="none" stroke="#1B5FB8" stroke-width="1.3"/><path d="M4.2 7.8L0.8 10.6" stroke="#1B5FB8" stroke-width="1.5"/></svg>
<div class="t" style="left:999px;top:671px;font-size:12px;letter-spacing:-0.45px;color:#333">Fin...</div>
</div>
</body></html>
